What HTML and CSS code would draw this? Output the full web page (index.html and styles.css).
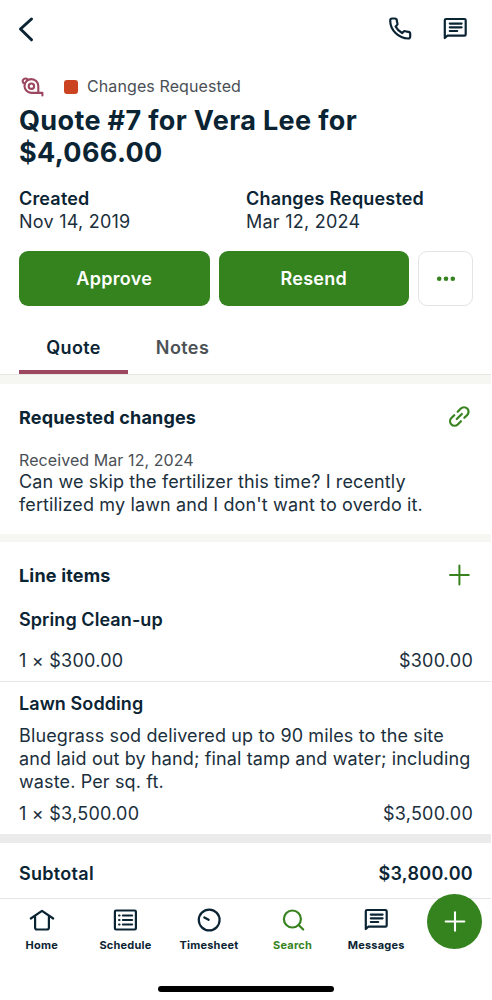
FILE: index.html
```html
<!DOCTYPE html>
<html lang="en">
<head>
<meta charset="utf-8">
<meta name="viewport" content="width=device-width, initial-scale=1">
<title>Quote #7</title>
<link rel="stylesheet" href="styles.css">
</head>
<body>
<div class="screen">
  <header class="topbar">
    <svg class="icon back" width="18" height="28" viewBox="0 0 18 28"><path d="M14.500 4 3.500 14l11 10.800" stroke-width="3"/></svg>
    <div class="topbar-actions">
      <svg class="icon" width="28" height="28" viewBox="0 0 28 28"><path d="M3.200 5.500c0-1.300.8-2 2-2h2.600c1.200 0 1.900.6 2 1.800.1 1.100.3 2 .6 2.900.3.800.1 1.500-.5 2.100L8.600 11.600c1.500 2.900 3.600 5 6.500 6.500l1.300-1.300c.6-.6 1.300-.8 2.100-.5.9.3 1.900.5 2.900.6 1.200.1 1.800.9 1.800 2v2.600c0 1.200-.8 2-2 2C11.500 23.500 3.200 15 3.200 5.500z" stroke-width="2.200"/></svg>
      <svg class="icon" width="28" height="28" viewBox="0 0 28 28"><use href="#chat"/></svg>
    </div>
  </header>

  <section class="summary">
    <div class="status">
      <svg class="tape" width="26" height="22" viewBox="0 0 26 22"><path d="M19.300 10.200a6.900 6.900 0 1 0-6.900 6.700h11v2.500M19.300 10.200v6.700"/><circle cx="12.400" cy="10.200" r="2.700"/><path d="M5.600 7.600C3.600 7 3.200 4.900 4.200 3.600S7.400 2 8.600 3.500"/></svg>
      <span class="status-dot"></span>
      <span class="status-text">Changes Requested</span>
    </div>
    <h1 class="title">Quote #7 for Vera Lee for<br>$4,066.00</h1>
    <dl class="dates">
      <div><dt>Created</dt><dd>Nov 14, 2019</dd></div>
      <div><dt>Changes Requested</dt><dd>Mar 12, 2024</dd></div>
    </dl>
    <div class="actions">
      <button class="btn">Approve</button>
      <button class="btn">Resend</button>
      <button class="btn-more" aria-label="More"><svg width="20" height="6" viewBox="0 0 20 6"><circle cx="3.200" cy="2.800" r="2.300"/><circle cx="10" cy="2.800" r="2.300"/><circle cx="16.800" cy="2.800" r="2.300"/></svg></button>
    </div>
  </section>

  <nav class="tabs"><span class="tab active">Quote</span><span class="tab">Notes</span></nav>

  <section class="requested">
    <div class="section-head">
      <h2>Requested changes</h2>
      <svg class="icon green" width="28" height="28" viewBox="0 0 28 28"><g transform="translate(14.300 13.500) rotate(-45)" stroke-width="2.200"><path d="M-2.600-4.500H-6.700a4.500 4.500 0 0 0 0 9h4.500M2.200-4.500H6.700a4.500 4.500 0 0 1 0 9H2.600M-3.600 0h7.200"/></g></svg>
    </div>
    <p class="received">Received Mar 12, 2024</p>
    <p class="body">Can we skip the fertilizer this time? I recently<br>fertilized my lawn and I don't want to overdo it.</p>
  </section>

  <section class="items">
    <div class="section-head">
      <h2>Line items</h2>
      <svg class="icon green" width="28" height="28" viewBox="0 0 28 28"><path d="M14.400 4.600v18.800M5 14h18.800" stroke-width="2"/></svg>
    </div>
    <article class="item first">
      <h3>Spring Clean-up</h3>
      <div class="price"><span>1 × $300.00</span><span>$300.00</span></div>
    </article>
    <article class="item second">
      <h3>Lawn Sodding</h3>
      <p class="body">Bluegrass sod delivered up to 90 miles to the site<br>and laid out by hand; final tamp and water; including<br>waste. Per sq. ft.</p>
      <div class="price"><span>1 × $3,500.00</span><span>$3,500.00</span></div>
    </article>
  </section>

  <section class="subtotal"><span>Subtotal</span><span>$3,800.00</span></section>

  <footer class="bottom">
    <nav class="navbar">
      <a class="nav-item"><svg class="icon" width="28" height="28" viewBox="0 0 28 28"><path d="M2.800 12.500 14 4.800l11.200 7.700M7.100 10.500V21.500c0 1.200.7 2 1.900 2h10c1.200 0 1.900-.8 1.900-2V10.500" stroke-width="2.200"/></svg>Home</a>
      <a class="nav-item"><svg class="icon" width="28" height="28" viewBox="0 0 28 28"><rect x="3.900" y="4.500" width="21" height="19" rx="1.200" stroke-width="2.200"/><path d="M11.900 9.500h9.200M11.900 14h9.200M11.900 18.500h9.200M8.100 9.500h.4M8.100 14h.4M8.100 18.500h.4" stroke-width="2.200"/></svg>Schedule</a>
      <a class="nav-item"><svg class="icon" width="28" height="28" viewBox="0 0 28 28"><circle cx="14.200" cy="14" r="10.400" stroke-width="2.200"/><path d="m9.400 11.500 4.200 2.200" stroke-width="2.400"/></svg>Timesheet</a>
      <a class="nav-item current"><svg class="icon" width="28" height="28" viewBox="0 0 28 28"><circle cx="13.400" cy="13" r="8.500" stroke-width="2.200"/><path d="m19.600 19 4.600 4.500" stroke-width="2.200"/></svg>Search</a>
      <a class="nav-item"><svg class="icon" width="28" height="28" viewBox="0 0 28 28"><g id="chat"><path d="M3.800 23V5.300c0-.8.500-1.300 1.300-1.300h18.300c.8 0 1.300.5 1.300 1.300v14.100c0 .8-.5 1.300-1.300 1.300H6.300z" stroke-width="2.200"/><path d="M8.800 8.600h11.800M8.800 12.300h11.800M8.800 16h7.400" stroke-width="2.200"/></g></svg>Messages</a>
    </nav>
    <button class="fab" aria-label="Create"><svg width="22" height="22" viewBox="0 0 22 22"><path d="M11 1.300v18.500M1.700 10.500h18.600"/></svg></button>
    <div class="home-indicator"></div>
  </footer>
</div>
</body>
</html>
```
FILE: styles.css
```css
* { box-sizing: border-box; margin: 0; padding: 0; }
body { background: #fff; font-family: Inter, "Liberation Sans", sans-serif; color: #0b2433; }
.screen { width: 491px; height: 1000px; display: flex; flex-direction: column; font-size: 18px; line-height: 23px; letter-spacing: .18px; overflow: hidden; }
.icon { display: block; fill: none; stroke: #0b2433; stroke-linecap: round; stroke-linejoin: round; flex: none; }
.icon.green { stroke: #38831f; }

.topbar { height: 57px; padding: 0 22px 0 17px; display: flex; align-items: center; justify-content: space-between; flex: none; }
.topbar-actions { display: flex; gap: 26px; }

.summary { padding: 19px 18px 0 19px; flex: none; }
.status { height: 22px; display: flex; align-items: center; color: #4a4f55; font-size: 16px; letter-spacing: .1px; }
.status-text { margin-top: -1px; }
.tape { display: block; fill: none; stroke: #9c4660; stroke-width: 2.100; stroke-linecap: round; stroke-linejoin: round; }
.status-dot { width: 14px; height: 14px; margin: -1px 9px 0 19px; border-radius: 3px; background: #cb4321; }
.title { margin-top: 7px; font-size: 27px; line-height: 32px; font-weight: 700; letter-spacing: .36px; }
.dates { margin-top: 18px; display: grid; grid-template-columns: 227px 1fr; }
.dates dt { font-weight: 600; }
.dates dd { letter-spacing: .24px; color: #1b2f3c; }
.actions { margin-top: 18px; display: flex; gap: 9px; }
.btn { flex: 1; height: 55px; border: 0; border-radius: 9px; background: #35831f; color: #fff; font: 600 18px/23px Inter, sans-serif; letter-spacing: .3px; }
.btn-more { width: 55px; height: 55px; display: grid; place-items: center; border: 1px solid #e3e4e5; border-radius: 9px; background: #fff; fill: #35831f; }

.tabs { height: 69px; padding-left: 19px; display: flex; border-bottom: 1px solid #e6e6e4; flex: none; }
.tab { width: 109px; padding-top: 30px; text-align: center; font-weight: 600; letter-spacing: .4px; color: #4c5156; }
.tab.active { color: #0b2433; border-bottom: 4px solid #9c4660; }

.requested { height: 167px; padding: 19px 18px 0 19px; border-top: 9px solid #f6f6f2; border-bottom: 8px solid #f6f6f2; flex: none; }
.section-head { height: 28px; display: flex; align-items: center; justify-content: space-between; }
h2, h3 { font-size: 18px; font-weight: 600; line-height: 23px; }
h2 { font-weight: 700; }
h3 { letter-spacing: .08px; }
.received { margin-top: 19px; font-size: 16px; line-height: 20px; letter-spacing: .08px; color: #4a4f55; }
.body { letter-spacing: .13px; color: #1b2f3c; }

.items { height: 292px; padding-top: 19px; flex: none; }
.items .section-head { padding: 0 18px 0 19px; }
.item { padding: 0 18px 0 19px; }
.item.first { height: 93px; padding-top: 19px; border-bottom: 1px solid #e6e7e8; }
.price { display: flex; justify-content: space-between; letter-spacing: .24px; color: #1b2f3c; }
.first .price { margin-top: 18px; }
.second { padding-top: 10px; }
.second .body { margin-top: 9px; }
.second .price { margin-top: 9px; }

.subtotal { height: 64px; padding: 19px 18px 0 19px; border-top: 9px solid #ebebeb; display: flex; justify-content: space-between; font-weight: 600; letter-spacing: .3px; flex: none; }

.bottom { position: relative; flex: 1; border-top: 1px solid #e4e5e6; }
.navbar { display: grid; grid-template-columns: repeat(5, 83.600px); padding-top: 7px; }
.nav-item { display: flex; flex-direction: column; align-items: center; gap: 5px; font-size: 11px; line-height: 13px; font-weight: 700; letter-spacing: .2px; }
.nav-item.current { color: #38831f; }
.nav-item.current .icon { stroke: #38831f; }
.fab { position: absolute; left: 427px; top: -5px; width: 55px; height: 55px; display: grid; place-items: center; border: 0; border-radius: 50%; background: #35831f; }
.fab svg { stroke: #fff; stroke-width: 2.100; stroke-linecap: round; }
.home-indicator { width: 176px; height: 6px; margin: 34px 0 0 158px; border-radius: 3px; background: #000; }
```
